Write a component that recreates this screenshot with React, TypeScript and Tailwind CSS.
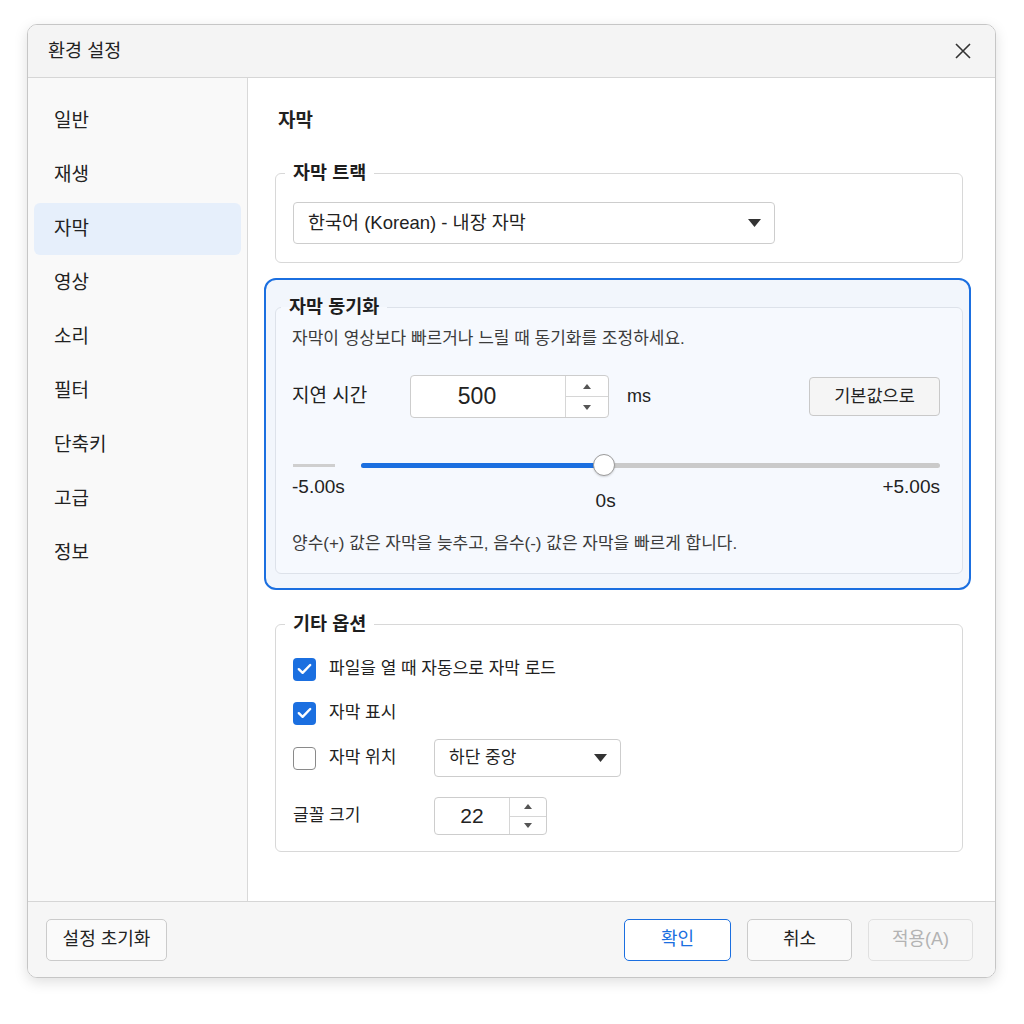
import type { ReactNode } from 'react';

const FONT = 'font-["Liberation_Sans","Noto_Sans_CJK_KR",sans-serif]';

const navItems = ['일반', '재생', '자막', '영상', '소리', '필터', '단축키', '고급', '정보'];

function Caret({ className = '' }: { className?: string }) {
  return (
    <svg width="13" height="8" viewBox="0 0 13 8" className={className}>
      <path d="M0 0 H13 L6.5 8 Z" fill="#333" />
    </svg>
  );
}

function Spin({ up }: { up?: boolean }) {
  return (
    <svg width="8" height="5" viewBox="0 0 8 5">
      <path d={up ? 'M0 5 H8 L4 0 Z' : 'M0 0 H8 L4 5 Z'} fill="#555" />
    </svg>
  );
}

function Check({ checked }: { checked: boolean }) {
  if (!checked) {
    return <span className="w-[23px] h-[23px] rounded-[4px] border border-[#8a8a8a] bg-white shrink-0" />;
  }
  return (
    <span className="w-[23px] h-[23px] rounded-[4px] bg-[#1b6fe0] flex items-center justify-center shrink-0">
      <svg width="15" height="12" viewBox="0 0 15 12">
        <path d="M1.8 6.2 L5.6 9.8 L13.2 2" fill="none" stroke="#fff" strokeWidth="2.4" strokeLinecap="round" strokeLinejoin="round" />
      </svg>
    </span>
  );
}

function Group({ title, children, className = '', legendClass = '-ml-[8px]' }: { title: string; children: ReactNode; className?: string; legendClass?: string }) {
  return (
    <fieldset className={`border border-[#d8d8d8] rounded-[6px] ${className}`}>
      <legend className={`${legendClass} px-[8px] text-[18.5px] font-bold leading-[24px] text-[#1e1e1e]`}>{title}</legend>
      {children}
    </fieldset>
  );
}

export default function App() {
  return (
    <div className={`w-[1024px] h-[1024px] bg-white pt-[24px] pl-[27px] ${FONT} text-[#222]`}>
      <div className="w-[969px] h-[954px] flex flex-col rounded-[10px] border border-[#c6c6c6] shadow-[0_4px_14px_rgba(0,0,0,0.13)] overflow-hidden">
        {/* title bar */}
        <div className="h-[53px] shrink-0 flex items-center justify-between pl-[20px] pr-[23px] bg-[#f4f4f4] border-b border-[#d6d6d6]">
          <span className="text-[18.5px]">환경 설정</span>
          <svg width="18" height="18" viewBox="0 0 18 18">
            <path d="M2 2 L16 16 M16 2 L2 16" stroke="#333" strokeWidth="1.6" />
          </svg>
        </div>

        <div className="flex flex-1 min-h-0">
          {/* sidebar */}
          <nav className="w-[220px] shrink-0 bg-[#f9f9f9] border-r border-[#d9d9d9] pt-[17px] px-[6px] flex flex-col gap-[2px]">
            {navItems.map((n) => (
              <div
                key={n}
                className={`h-[52px] pl-[20px] flex items-center rounded-[6px] text-[19px] ${n === '자막' ? 'bg-[#e6effb]' : ''}`}
              >
                {n}
              </div>
            ))}
          </nav>

          {/* content */}
          <main className="flex-1 bg-white pl-[27px] pr-[32px] pt-[30px]">
            <h2 className="text-[19px] font-bold leading-[26px] pl-[3px]">자막</h2>

            <Group title="자막 트랙" className="mt-[27px] pl-[17px] pr-[17px] pt-[17px] pb-[18px]">
              <div className="w-[482px] h-[42px] flex items-center justify-between pl-[14px] pr-[13px] border border-[#cdcdcd] rounded-[4px] bg-white text-[18.5px]">
                <span>한국어 (Korean) - 내장 자막</span>
                <Caret />
              </div>
            </Group>

            {/* highlighted sync section */}
            <div className="mt-[15px] -ml-[11px] -mr-[8px] border-2 border-[#1b6fe0] rounded-[12px] bg-[#f2f6fc] pl-[9px] pr-[6px] pt-[15px] pb-[14px]">
              <Group title="자막 동기화" legendClass="-ml-[11px]" className="bg-[#f6f9fe] border-[#dde2ea] pl-[16px] pr-[22px] pt-[8px] pb-[17px]">
                <p className="text-[17px] leading-[24px] text-[#3c3c3c]">자막이 영상보다 빠르거나 느릴 때 동기화를 조정하세요.</p>

                <div className="mt-[24px] h-[43px] flex items-center">
                  <span className="w-[118px] text-[19px]">지연 시간</span>
                  <div className="w-[199px] h-[43px] flex border border-[#cdcdcd] rounded-[4px] bg-white overflow-hidden">
                    <span className="flex-1 flex items-center justify-center pr-[22px] text-[23px]">500</span>
                    <div className="w-[43px] flex flex-col border-l border-[#d6d6d6]">
                      <span className="flex-1 flex items-center justify-center"><Spin up /></span>
                      <span className="flex-1 flex items-center justify-center border-t border-[#d6d6d6]"><Spin /></span>
                    </div>
                  </div>
                  <span className="ml-[18px] text-[18px]">ms</span>
                  <button className="ml-auto w-[131px] h-[39px] rounded-[4px] border border-[#c9c9c9] bg-[#f5f5f5] text-[17.5px]">기본값으로</button>
                </div>

                <div className="mt-[36px] h-[22px] flex items-center">
                  <span className="w-[42px] h-[3px] bg-[#cfcfcf] ml-[1px]" />
                  <div className="relative ml-[26px] flex-1 h-[5px] rounded-full bg-[#cacaca]">
                    <div className="h-full w-[42%] rounded-full bg-[#1b6fe0]" />
                    <span className="absolute left-[42%] top-1/2 -translate-x-1/2 -translate-y-1/2 w-[22px] h-[22px] rounded-full bg-white border border-[#9b9b9b] shadow-[0_1px_2px_rgba(0,0,0,0.15)]" />
                  </div>
                </div>

                <div className="flex items-start justify-between text-[19px] leading-[22px]">
                  <span>-5.00s</span>
                  <span className="mt-[14px] mr-[16px]">0s</span>
                  <span>+5.00s</span>
                </div>

                <p className="mt-[20px] text-[17px] leading-[24px] text-[#3c3c3c]">양수(+) 값은 자막을 늦추고, 음수(-) 값은 자막을 빠르게 합니다.</p>
              </Group>
            </div>

            <Group title="기타 옵션" className="mt-[22px] pl-[17px] pr-[17px] pt-[21px] pb-[16px]">
              <label className="h-[24px] flex items-center gap-[13px] text-[17px]">
                <Check checked />
                파일을 열 때 자동으로 자막 로드
              </label>
              <label className="mt-[20px] h-[24px] flex items-center gap-[13px] text-[17px]">
                <Check checked />
                자막 표시
              </label>
              <div className="mt-[14px] h-[38px] flex items-center text-[17px]">
                <Check checked={false} />
                <span className="ml-[13px] w-[105px]">자막 위치</span>
                <div className="w-[187px] h-[38px] flex items-center justify-between pl-[14px] pr-[13px] border border-[#cdcdcd] rounded-[4px] bg-white">
                  <span>하단 중앙</span>
                  <Caret />
                </div>
              </div>
              <div className="mt-[20px] h-[38px] flex items-center text-[17px]">
                <span className="w-[141px]">글꼴 크기</span>
                <div className="w-[113px] h-[38px] flex border border-[#cdcdcd] rounded-[4px] bg-white overflow-hidden">
                  <span className="flex-1 flex items-center justify-center text-[21px]">22</span>
                  <div className="w-[37px] flex flex-col border-l border-[#d6d6d6]">
                    <span className="flex-1 flex items-center justify-center"><Spin up /></span>
                    <span className="flex-1 flex items-center justify-center border-t border-[#d6d6d6]"><Spin /></span>
                  </div>
                </div>
              </div>
            </Group>
          </main>
        </div>

        {/* footer */}
        <div className="h-[76px] shrink-0 flex items-center pl-[18px] pr-[22px] bg-[#f6f6f6] border-t border-[#d6d6d6]">
          <button className="w-[121px] h-[42px] rounded-[5px] border border-[#cbcbcb] bg-[#fafafa] text-[18px]">설정 초기화</button>
          <div className="ml-auto flex gap-[16px]">
            <button className="w-[107px] h-[42px] rounded-[5px] border-[1.5px] border-[#1b6fe0] bg-white text-[#1b6fe0] text-[18px]">확인</button>
            <button className="w-[105px] h-[42px] rounded-[5px] border border-[#cbcbcb] bg-[#fafafa] text-[18px]">취소</button>
            <button className="w-[105px] h-[42px] rounded-[5px] border border-[#e0e0e0] bg-[#f7f7f7] text-[#b3b3b3] text-[18px]">적용(A)</button>
          </div>
        </div>
      </div>
    </div>
  );
}
